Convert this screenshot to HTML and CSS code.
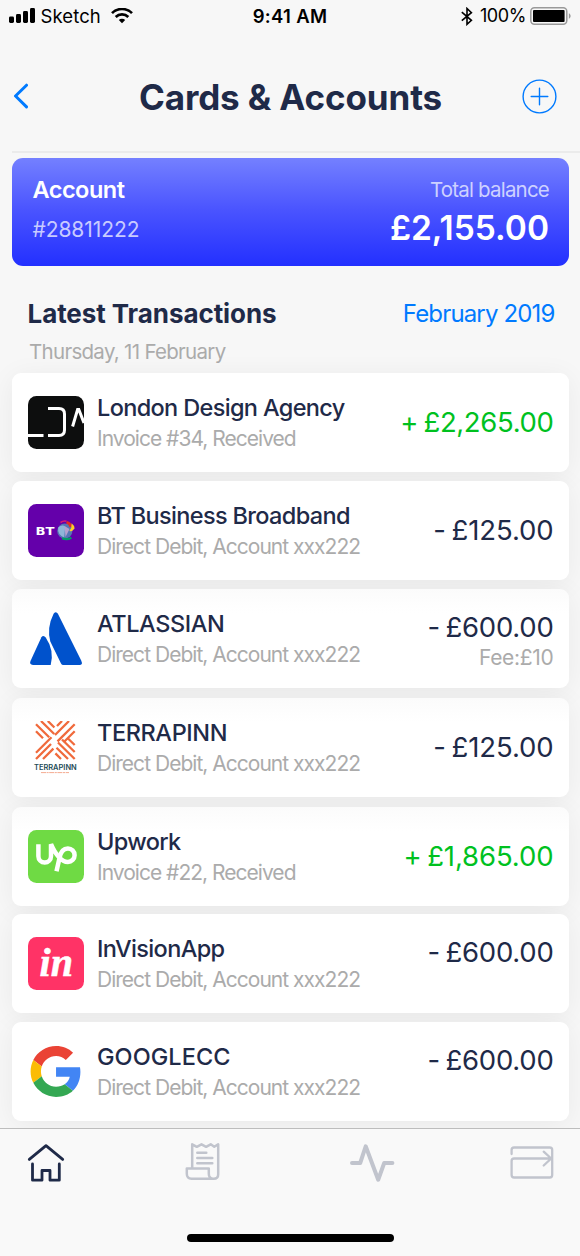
FILE: index.html
```html
<!DOCTYPE html>
<html lang="en">
<head>
<meta charset="utf-8">
<title>Cards &amp; Accounts</title>
<link rel="stylesheet" href="styles.css">
</head>
<body>
<div class="screen">
  <div class="status">
    <div class="status-left">
      <svg width="26" height="16" viewBox="0 0 26 16"><rect y="8.5" width="5" height="6.5" rx="1.4"/><rect x="7" y="6" width="5" height="9" rx="1.4"/><rect x="14" y="3" width="5" height="12" rx="1.4"/><rect x="21" y="0" width="5" height="15" rx="1.4"/></svg>
      <span class="carrier">Sketch</span>
      <svg class="wifi" width="22" height="16" viewBox="0 0 22 16" fill="none" stroke="#000" stroke-width="2.7"><path d="M1 5.1a14.3 14.3 0 0 1 20 0M4.7 9a9 9 0 0 1 12.6 0"/><path d="M11 15.2L7.8 12a4.6 4.6 0 0 1 6.4 0z" fill="#000" stroke="none"/></svg>
    </div>
    <div class="time">9:41 AM</div>
    <div class="status-right">
      <svg width="12" height="19" viewBox="0 0 12 19" fill="none" stroke="#000" stroke-width="1.6"><path d="M.8 5.1l9.6 8.2L6 17.3V1.5l4.400 4.100L.8 13.700"/></svg>
      <span class="pct">100%</span>
      <svg width="41" height="18" viewBox="0 0 41 18"><rect x=".8" y=".8" width="36" height="16.4" rx="3.6" fill="none" stroke="#999" stroke-width="1.5"/><rect x="3" y="3" width="31.6" height="12" rx="1"/><path d="M38.9 6.3c2.3 1 2.3 4.4 0 5.4z" fill="#999"/></svg>
    </div>
  </div>

  <header class="header">
    <svg width="16" height="26" viewBox="0 0 16 26" fill="none" stroke="#007aff" stroke-width="3" stroke-linecap="round" stroke-linejoin="round"><path d="M14.5 2.2L3.5 13l11 10.9"/></svg>
    <h1>Cards &amp; Accounts</h1>
    <svg width="35" height="35" viewBox="0 0 35 35" fill="none" stroke="#007aff" stroke-width="1.4" stroke-linecap="round"><circle cx="17.5" cy="17.5" r="16.4"/><path d="M17.5 9.2v16.6M9.2 17.5h16.6"/></svg>
  </header>

  <section class="account">
    <div>
      <div class="acc-name">Account</div>
      <div class="acc-num">#28811222</div>
    </div>
    <div class="balance">
      <div class="bal-label">Total balance</div>
      <div class="bal-value">£2,155.00</div>
    </div>
  </section>

  <div class="section-head">
    <h2>Latest Transactions</h2>
    <a class="month">February 2019</a>
  </div>
  <div class="date">Thursday, 11 February</div>

  <main class="list">
    <article class="card">
      <svg class="logo" viewBox="0 0 56 53"><rect width="56" height="53" rx="8.5" fill="#0d0e0e"/><g fill="none" stroke="#fff" stroke-width="3"><path d="M0 39.4h15.500M20 12.600h11q5.500 0 5.500 5.500v16q0 5.500-5.500 5.500h-11M44.600 30.500l5-17h1.200L56 27"/></g></svg>
      <div class="info"><div class="name">London Design Agency</div><div class="sub">Invoice #34, Received</div></div>
      <div class="amounts"><div class="amount in long">+ £2,265.00</div></div>
    </article>
    <article class="card">
      <svg class="logo" viewBox="0 0 56 53"><rect width="56" height="53" rx="8.5" fill="#6400aa"/><text x="7.6" y="30.6" font-family="DejaVu Sans" font-weight="700" font-size="9.8" textLength="19" lengthAdjust="spacingAndGlyphs" fill="#fff">BT</text><circle cx="36.8" cy="27" r="7.6" fill="#5577b5"/><path d="M30.2 23.6q4-3.4 7-1l-1 11q-7-3-6-10z" fill="#8eb5d8"/><path d="M36.5 22l5 3-4 8z" fill="#b5a0cf"/><path d="M32.5 18.5q3-2 6-1.2" stroke="#d71978" stroke-width="1.6" fill="none"/><path d="M39 17q4.4 1 5 5.4l-2.5.8q-.5-3-3.5-4z" fill="#e62c20"/><path d="M43.6 19.2q3 2.4 3 5.2-2.6 3.4-5.2 2.6 2.5-3 2.2-7.8z" fill="#ffcf26"/><path d="M34 34.2q5 2 9.4-.5" stroke="#009c68" stroke-width="2.2" fill="none"/></svg>
      <div class="info"><div class="name">BT Business Broadband</div><div class="sub">Direct Debit, Account xxx222</div></div>
      <div class="amounts"><div class="amount">- £125.00</div></div>
    </article>
    <article class="card shade">
      <svg class="logo" viewBox="0 0 56 53" fill="#0052cc"><path d="M27.7.3q1.500 0 2.200 1.500L53.200 48.400q2 4.600-1.800 4.600H35.300q-1.500 0-2.300-1.600L22.300 29.600Q18.600 15.600 25.600 1.800 26.300.3 27.700.3z"/><path d="M15.400 24q1.200 0 2.300 1.500 8.700 12.500 5 27.500H5Q1 52.600 2.500 49L13.400 25.200Q14.200 24 15.400 24z"/></svg>
      <div class="info"><div class="name caps">ATLASSIAN</div><div class="sub">Direct Debit, Account xxx222</div></div>
      <div class="amounts raised"><div class="amount six">- £600.00</div><div class="fee">Fee:£10</div></div>
    </article>
    <article class="card shade push">
      <svg class="logo" viewBox="0 0 56 53"><g fill="none" stroke="#f06a3c" stroke-width="2.3"><path d="M8 10.3l7 7M8 3.300l13.200 13M13 0l13.200 13M19.800 0l6.600 6.500M46.700 3.300L29.500 20.400M41 0L27 14M34 0l-5 5M46.700 10.300L35.400 21.500M8 31.700l15.500-15.400M8 38l15-15M15 38l10.400-10.400M46.700 38L30 21.500M46.700 31L34 18.500M46.700 24L40 17.500M40 38L28.500 26.800M33 38l-5.600-5.600"/></g><text x="6" y="49" font-family="Inter" font-size="7.8" font-weight="600" textLength="42.7" lengthAdjust="spacingAndGlyphs" fill="#234b57">TERRAPINN</text><path d="M13 51.6h28" stroke="#f3a186" stroke-width=".9" stroke-dasharray="5 .6 2 .6"/></svg>
      <div class="info"><div class="name caps">TERRAPINN</div><div class="sub">Direct Debit, Account xxx222</div></div>
      <div class="amounts"><div class="amount">- £125.00</div></div>
    </article>
    <article class="card shade push">
      <svg class="logo" viewBox="0 0 56 53"><rect width="56" height="53" rx="8.5" fill="#6fda44"/><g fill="none" stroke="#fff" stroke-width="4.5"><path d="M10.400 14.200v12.100a6.300 6.300 0 0 0 12.600 0V14.200q3.500 8.300 8 13"/><path d="M28.500 41.300l3-13.300q1.700-9.500 8.400-9.500a6.700 6.700 0 1 1 0 13.400q-4.800 0-8.800-4.700"/></g></svg>
      <div class="info"><div class="name">Upwork</div><div class="sub">Invoice #22, Received</div></div>
      <div class="amounts"><div class="amount in">+ £1,865.00</div></div>
    </article>
    <article class="card pull">
      <svg class="logo" viewBox="0 0 56 53"><rect width="56" height="53" rx="8.5" fill="#ff3366"/><text x="11.5" y="38.8" font-family="Liberation Serif" font-style="italic" font-weight="700" font-size="39" textLength="33.5" lengthAdjust="spacingAndGlyphs" fill="#fff" stroke="#fff" stroke-width=".5">in</text></svg>
      <div class="info"><div class="name">InVisionApp</div><div class="sub">Direct Debit, Account xxx222</div></div>
      <div class="amounts raised"><div class="amount six">- £600.00</div></div>
    </article>
    <article class="card">
      <svg class="logo" viewBox="0 0 56 53"><g transform="translate(2.6 1) scale(1.06)"><path fill="#ea4335" d="M24 9.5c3.54 0 6.71 1.22 9.21 3.6l6.85-6.85C35.9 2.38 30.47 0 24 0 14.62 0 6.51 5.38 2.56 13.22l7.98 6.19C12.43 13.72 17.74 9.5 24 9.5z"/><path fill="#4285f4" d="M46.98 24.55c0-1.57-.15-3.09-.38-4.55H24v9.02h12.94c-.58 2.96-2.26 5.48-4.78 7.18l7.73 6c4.51-4.18 7.09-10.36 7.09-17.65z"/><path fill="#fbbc05" d="M10.53 28.59c-.48-1.45-.76-2.99-.76-4.59s.27-3.14.76-4.59l-7.98-6.19C.92 16.46 0 20.12 0 24c0 3.88.92 7.54 2.56 10.78l7.97-6.19z"/><path fill="#34a853" d="M24 48c6.48 0 11.93-2.13 15.89-5.81l-7.73-6c-2.15 1.45-4.92 2.3-8.16 2.3-6.26 0-11.57-4.22-13.47-9.91l-7.98 6.19C6.51 42.62 14.62 48 24 48z"/></g></svg>
      <div class="info"><div class="name wide">GOOGLECC</div><div class="sub">Direct Debit, Account xxx222</div></div>
      <div class="amounts raised"><div class="amount six">- £600.00</div></div>
    </article>
  </main>

  <nav class="tabs">
    <div class="tab-row">
      <svg width="38" height="41" viewBox="0 0 38 41" fill="none" stroke="#1f2a48" stroke-width="2.8" stroke-linecap="round" stroke-linejoin="round"><path d="M2.3 17.400L19 3.700 35.700 17.400M5.500 22v16.200H15V28.500h8v9.700h9.300V22"/></svg>
      <svg class="tab-receipt" width="36" height="40" viewBox="0 0 36 40" fill="none" stroke="#c1c4cd" stroke-width="2.5" stroke-linecap="round" stroke-linejoin="round"><path d="M7.200 26.500V2.300l4.600 2.500L16.500 2.300l4.600 2.500L25.700 2.300l3.600 2.500L33.200 2.300v29.900q0 4.500-4.500 4.500H6.500q-4.700 0-4.700-5V26.500h22v5.200q0 5 4.500 5M12.300 10.800h9M12.300 16h15M12.300 21.300h15"/></svg>
      <svg class="tab-pulse" width="46" height="40" viewBox="0 0 46 40" fill="none" stroke="#c1c4cd" stroke-width="4" stroke-linecap="round" stroke-linejoin="round"><path d="M2 21h8.200L15.700 4.300l12.500 33.400 6-16.700h8.200"/></svg>
      <svg class="tab-card" width="44" height="40" viewBox="0 0 44 40" fill="none" stroke="#c1c4cd" stroke-width="2.300" stroke-linecap="round" stroke-linejoin="round"><path d="M1.600 12V8q0-2.500 2.500-2.500h35.600q2.500 0 2.500 2.500v25q0 2.500-2.500 2.500H4.100q-2.500 0-2.500-2.500V19q0-2.500 2.500-2.500h37M33.700 9.700l7.500 6.800-7.500 7"/></svg>
    </div>
    <div class="home-bar"></div>
  </nav>
</div>
</body>
</html>
```
FILE: styles.css
```css
* { box-sizing: border-box; }
body { margin: 0; background: #f7f7f7; font-family: Inter, "Liberation Sans", sans-serif; color: #1f2a48; }
svg { display: block; flex: none; }
h1, h2 { margin: 0; }
.screen { width: 580px; height: 1256px; overflow: hidden; display: flex; flex-direction: column; }

.status { height: 32px; flex: none; display: grid; grid-template-columns: 1fr auto 1fr; padding: 0 9px; color: #000; font-size: 18.5px; line-height: 32px; }
.status-left, .status-right { display: flex; align-items: center; }
.carrier { margin-left: 5.5px; letter-spacing: .1px; }
.wifi { margin-left: 10px; }
.time { font-weight: 600; letter-spacing: .3px; }
.status-right { justify-content: flex-end; }
.pct { font-size: 18px; margin: 0 4px 0 6.5px; letter-spacing: -.4px; }

.header { height: 119px; flex: none; margin-left: 12px; padding: 9px 23px 0 0; display: flex; align-items: center; justify-content: space-between; }
.header h1 { font-size: 35px; font-weight: 700; line-height: 50px; letter-spacing: -.12px; padding: 2px 0 0 31px; }

.account { height: 108px; flex: none; margin: 7px 11px 0 12px; position: relative; border-radius: 11px; display: flex; justify-content: space-between; background: linear-gradient(#7480ff, #4a54ff 48%, #2330ff); }
.account::before { content: ""; position: absolute; top: -7px; left: 0; width: 568px; height: 2px; background: #ebebeb; }
.account > div { padding: 16px 20px 0 20.5px; }
.acc-name { font-size: 23.5px; font-weight: 600; line-height: 32px; color: #fff; letter-spacing: -.5px; }
.acc-num { font-size: 21px; line-height: 30px; margin-top: 9px; color: #c8cbff; letter-spacing: -.08px; }
.balance { text-align: right; }
.bal-label { font-size: 20.5px; line-height: 32px; color: #cdd1ff; letter-spacing: -.8px; }
.bal-value { font-size: 33.5px; font-weight: 600; line-height: 44px; color: #fff; }

.section-head { flex: none; display: flex; justify-content: space-between; padding: 30px 25.5px 0 27.5px; line-height: 36px; }
.section-head h2 { font-size: 26px; font-weight: 700; letter-spacing: -.07px; }
.month { font-size: 24px; color: #007aff; letter-spacing: -.85px; }
.date { flex: none; padding-left: 29px; font-size: 20.5px; line-height: 30px; margin-top: 5px; height: 36px; color: #ababab; letter-spacing: -.7px; }

.list { flex: none; height: 755px; padding: 0 11px 0 12px; display: flex; flex-direction: column; gap: 9px; isolation: isolate; }
.card { position: relative; height: 99px; flex: none; border-radius: 9px; background: #fff; padding: 0 15.5px 0 16px; display: flex; }
.card::before { content: ""; position: absolute; inset: 0; z-index: -1; border-radius: 9px; box-shadow: 0 4px 28px rgba(0, 0, 0, .06); }
.shade { background: linear-gradient(#fbfbfb, #fff 24px); }
.push { margin-top: 1px; }
.pull { margin-top: -1px; }
.logo { width: 56px; height: 53px; margin: 23px 13px 0 0; }
.info { flex: 1; padding-top: 19px; }
.name { font-size: 23.5px; font-weight: 450; line-height: 31px; letter-spacing: -.65px; white-space: nowrap; }
.caps { letter-spacing: -.4px; }
.wide { letter-spacing: .05px; }
.sub { font-size: 21px; line-height: 31px; color: #ababab; letter-spacing: -.98px; white-space: nowrap; }
.amounts { padding-top: 32px; text-align: right; white-space: nowrap; }
.raised { padding-top: 21px; }
.amount { font-size: 27.5px; line-height: 34px; word-spacing: -2px; letter-spacing: -.1px; }
.long { letter-spacing: -.35px; }
.six { letter-spacing: -.25px; }
.in { color: #00c11f; }
.fee { font-size: 21px; line-height: 26px; margin-top: 1px; color: #ababab; letter-spacing: -.3px; }

.tabs { height: 128px; flex: none; background: #f9f9f9; border-top: 1px solid #bdbdbd; display: flex; flex-direction: column; align-items: center; justify-content: space-between; padding-bottom: 14px; position: relative; }
.tab-row { width: 100%; display: flex; padding: 13px 0 0 27px; }
.tab-receipt { margin-left: 120px; }
.tab-pulse { margin-left: 129px; }
.tab-card { margin-left: 114px; }
.home-bar { width: 207px; height: 8px; border-radius: 4px; background: #000; }
```
